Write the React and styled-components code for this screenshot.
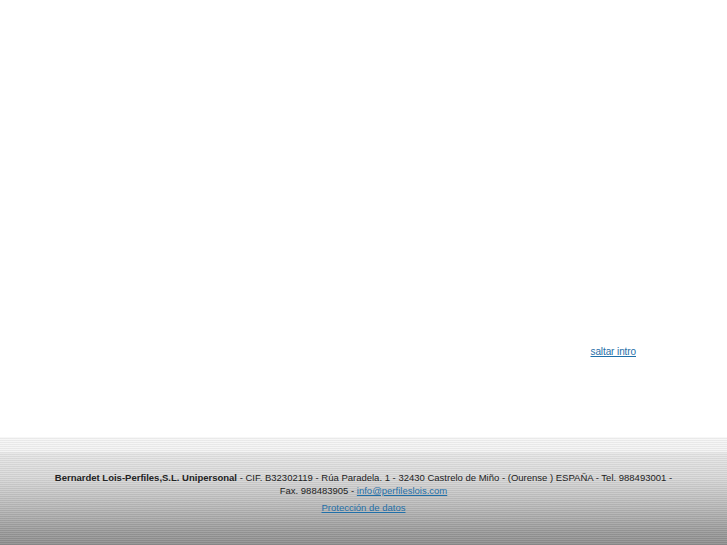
import React from "react";
import styled, { createGlobalStyle } from "styled-components";

const Global = createGlobalStyle`
  html, body { margin: 0; padding: 0; background: #ffffff; }
  body { font-family: "Liberation Sans", Arial, sans-serif; }
`;

const Page = styled.div`
  display: flex;
  flex-direction: column;
  min-height: 545px;
`;

const Intro = styled.main`
  height: 437px;
  display: flex;
  justify-content: flex-end;
  align-items: flex-start;
  padding: 346px 91px 0 0;
  box-sizing: border-box;
`;

const SkipLink = styled.a`
  font-size: 10px;
  color: #1f6fa8;
  text-decoration: underline;
  letter-spacing: -0.1px;
`;

const Footer = styled.footer`
  height: 108px;
  display: flex;
  flex-direction: column;
  background:
    repeating-linear-gradient(to bottom, rgba(255,255,255,0.10) 0 1px, rgba(0,0,0,0.05) 1px 2px),
    linear-gradient(to bottom, #f6f6f6 0, #f3f3f3 15px, #e6e6e6 16px, #d8d8d8 40px, #b8b8b8 70px, #9a9a9a 95px, #8d8d8d 108px);
`;

const FooterInner = styled.div`
  width: 632px;
  margin: 0 auto;
  padding-top: 34px;
  text-align: center;
  font-size: 9.5px;
  line-height: 13px;
  color: #222;
`;

const Strong = styled.strong`
  font-weight: bold;
`;

const MailLink = styled.a`
  color: #1f6fa8;
  text-decoration: underline;
`;

const Privacy = styled.div`
  margin-top: 4px;
`;

export default function App() {
  return (
    <Page>
      <Global />
      <Intro>
        <SkipLink href="#">saltar intro</SkipLink>
      </Intro>
      <Footer>
        <FooterInner>
          <div>
            <Strong>Bernardet Lois-Perfiles,S.L. Unipersonal</Strong> - CIF. B32302119 - Rúa Paradela. 1 - 32430 Castrelo de Miño - (Ourense ) ESPAÑA - Tel. 988493001 - Fax. 988483905 - <MailLink href="#">info@perfileslois.com</MailLink>
          </div>
          <Privacy>
            <MailLink href="#">Protección de datos</MailLink>
          </Privacy>
        </FooterInner>
      </Footer>
    </Page>
  );
}
